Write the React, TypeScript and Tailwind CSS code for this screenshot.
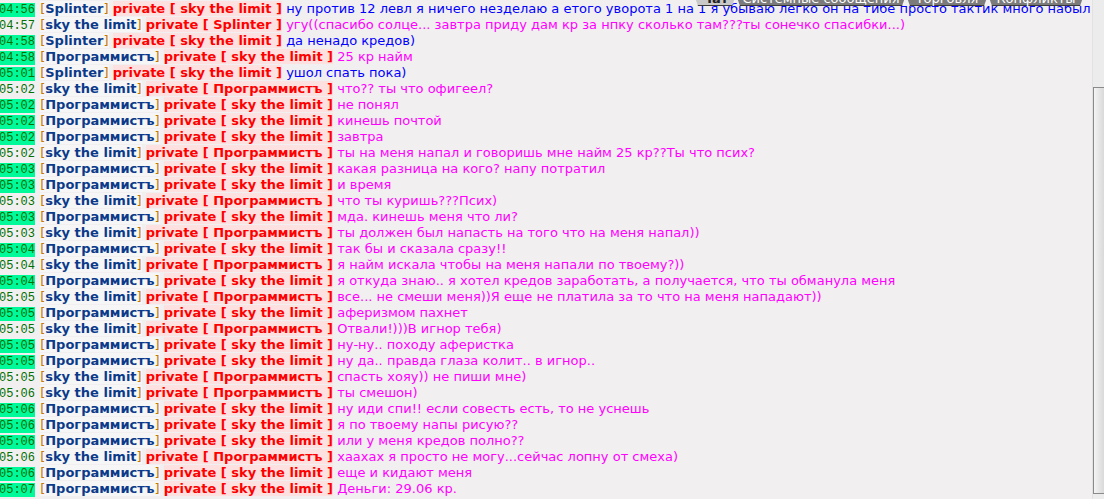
import React from "react";

type Row = { t: string; from: string; to: string; msg: string; hl: boolean; blue?: boolean };

const S = "Splinter";
const K = "sky the limit";
const P = "Программистъ";

const rows: Row[] = [
  { t: "04:56", from: S, to: K, hl: true, blue: true, msg: "ну против 12 левл я ничего незделаю а етого уворота 1 на 1 я убываю легко он на тибе просто тактик много набыл" },
  { t: "04:57", from: K, to: S, hl: false, msg: "угу((спасибо солце... завтра приду дам кр за нпку сколько там???ты сонечко спасибки...)" },
  { t: "04:58", from: S, to: K, hl: true, blue: true, msg: "да ненадо кредов)" },
  { t: "04:58", from: P, to: K, hl: true, msg: "25 кр найм" },
  { t: "05:01", from: S, to: K, hl: true, blue: true, msg: "ушол спать пока)" },
  { t: "05:02", from: K, to: P, hl: false, msg: "что?? ты что офигеел?" },
  { t: "05:02", from: P, to: K, hl: true, msg: "не понял" },
  { t: "05:02", from: P, to: K, hl: true, msg: "кинешь почтой" },
  { t: "05:02", from: P, to: K, hl: true, msg: "завтра" },
  { t: "05:02", from: K, to: P, hl: false, msg: "ты на меня напал и говоришь мне найм 25 кр??Ты что псих?" },
  { t: "05:03", from: P, to: K, hl: true, msg: "какая разница на кого? напу потратил" },
  { t: "05:03", from: P, to: K, hl: true, msg: "и время" },
  { t: "05:03", from: K, to: P, hl: false, msg: "что ты куришь???Псих)" },
  { t: "05:03", from: P, to: K, hl: true, msg: "мда. кинешь меня что ли?" },
  { t: "05:03", from: K, to: P, hl: false, msg: "ты должен был напасть на того что на меня напал))" },
  { t: "05:04", from: P, to: K, hl: true, msg: "так бы и сказала сразу!!" },
  { t: "05:04", from: K, to: P, hl: false, msg: "я найм искала чтобы на меня напали по твоему?))" },
  { t: "05:04", from: P, to: K, hl: true, msg: "я откуда знаю.. я хотел кредов заработать, а получается, что ты обманула меня" },
  { t: "05:05", from: K, to: P, hl: false, msg: "все... не смеши меня))Я еще не платила за то что на меня нападают))" },
  { t: "05:05", from: P, to: K, hl: true, msg: "аферизмом пахнет" },
  { t: "05:05", from: K, to: P, hl: false, msg: "Отвали!)))В игнор тебя)" },
  { t: "05:05", from: P, to: K, hl: true, msg: "ну-ну.. походу аферистка" },
  { t: "05:05", from: P, to: K, hl: true, msg: "ну да.. правда глаза колит.. в игнор.." },
  { t: "05:05", from: K, to: P, hl: false, msg: "спасть хояу)) не пиши мне)" },
  { t: "05:06", from: K, to: P, hl: false, msg: "ты смешон)" },
  { t: "05:06", from: P, to: K, hl: true, msg: "ну иди спи!! если совесть есть, то не уснешь" },
  { t: "05:06", from: P, to: K, hl: true, msg: "я по твоему напы рисую??" },
  { t: "05:06", from: P, to: K, hl: true, msg: "или у меня кредов полно??" },
  { t: "05:06", from: K, to: P, hl: false, msg: "хаахах я просто не могу...сейчас лопну от смеха)" },
  { t: "05:06", from: P, to: K, hl: true, msg: "еще и кидают меня" },
  { t: "05:07", from: P, to: K, hl: true, msg: "Деньги: 29.06 кр." },
];

function Tabs() {
  const tabs = [
    { label: "Чат", w: 46, active: true },
    { label: "Системные сообщения", w: 174, active: false },
    { label: "Торговля", w: 86, active: false },
    { label: "Конфликты", w: 100, active: false },
  ];
  return (
    <div className="absolute left-[692px] top-[-11px] flex h-[17px]">
      {tabs.map((tb, i) => (
        <div
          key={i}
          className={
            "-mr-[4px] flex h-[17px] items-end justify-center border-b border-[#3a3a3a] text-[13px] leading-none [clip-path:polygon(0_0,100%_0,calc(100%-6px)_100%,6px_100%)] " +
            (tb.active ? "bg-[#c9c9c9] font-bold text-[#222]" : "bg-[#7b7b7b] text-white")
          }
          style={{ width: tb.w }}
        >
          <span>{tb.label}</span>
        </div>
      ))}
    </div>
  );
}

export default function App() {
  return (
    <div className="relative flex h-[499px] w-[1104px] overflow-hidden bg-[#f2eff0] font-['DejaVu_Sans',Verdana,sans-serif] text-[13px]">
      <div className="relative flex-1 overflow-hidden pt-[1px]">
        {rows.map((r, i) => (
          <div key={i} className="h-4 whitespace-nowrap leading-4">
            <span
              className={
                "ml-[-1px] mr-[1px] font-['Liberation_Mono',monospace] text-[12px] text-[#007000] " +
                (r.hl ? "bg-[#00fa9a]" : "")
              }
            >
              {r.t}
            </span>{" "}
            <span className="bg-[#f6f6f6]">
              <span className="text-[#c87800]">[</span>
              <span className="font-bold text-[#0b3a8a]">{r.from}</span>
              <span className="text-[#c87800]">]</span>
            </span>{" "}
            <span className="bg-[#fde1e1] font-bold text-[#ff0000]">private [ {r.to} ]</span>{" "}
            <span className={r.blue ? "text-[#0000ff]" : "text-[#ff00ff]"}>{r.msg}</span>
          </div>
        ))}
        <Tabs />
      </div>
      <div className="flex w-[12px] flex-col border-l border-[#e2e2e2] bg-[#ececec]">
        <div className="h-[87px]" />
        <div className="h-[407px] border-l border-t border-b border-[#8a8a8a] bg-gradient-to-r from-[#f4f4f4] to-[#d9d9d9]" />
      </div>
    </div>
  );
}
